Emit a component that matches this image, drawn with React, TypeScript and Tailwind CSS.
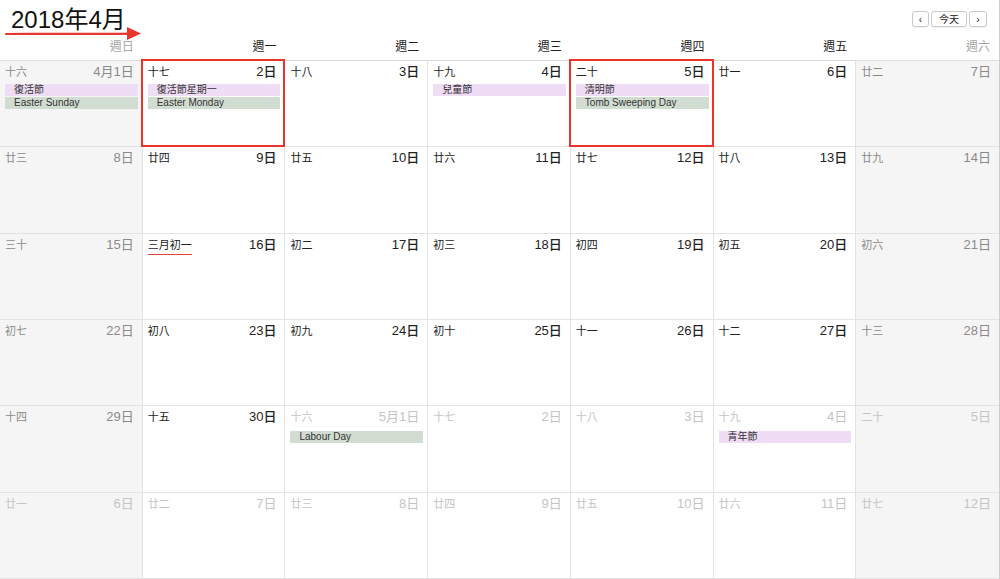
type Ev = { title: string; kind: "holiday" | "intl" };

interface Day {
  lunar: string;
  label: string;
  inMonth: boolean;
  events?: Ev[];
  highlight?: boolean;
  underline?: boolean;
}

const weekdays = ["週日", "週一", "週二", "週三", "週四", "週五", "週六"];

const lunars = [
  "十六", "十七", "十八", "十九", "二十", "廿一", "廿二",
  "廿三", "廿四", "廿五", "廿六", "廿七", "廿八", "廿九",
  "三十", "三月初一", "初二", "初三", "初四", "初五", "初六",
  "初七", "初八", "初九", "初十", "十一", "十二", "十三",
  "十四", "十五", "十六", "十七", "十八", "十九", "二十",
  "廿一", "廿二", "廿三", "廿四", "廿五", "廿六", "廿七",
];

const eventsByIndex: Record<number, Ev[]> = {
  0: [
    { title: "復活節", kind: "holiday" },
    { title: "Easter Sunday", kind: "intl" },
  ],
  1: [
    { title: "復活節星期一", kind: "holiday" },
    { title: "Easter Monday", kind: "intl" },
  ],
  3: [{ title: "兒童節", kind: "holiday" }],
  4: [
    { title: "清明節", kind: "holiday" },
    { title: "Tomb Sweeping Day", kind: "intl" },
  ],
  30: [{ title: "Labour Day", kind: "intl" }],
  33: [{ title: "青年節", kind: "holiday" }],
};

const days: Day[] = lunars.map((lunar, i) => {
  const inMonth = i < 30;
  const n = inMonth ? i + 1 : i - 29;
  let label = `${n}日`;
  if (i === 0) label = "4月1日";
  if (i === 30) label = "5月1日";
  return {
    lunar,
    label,
    inMonth,
    events: eventsByIndex[i],
    highlight: i === 1 || i === 4,
    underline: i === 15,
  };
});

function DayCell({ day, col }: { day: Day; col: number }) {
  const weekend = col === 0 || col === 6;
  const textColor = !day.inMonth
    ? "text-[#c4c4c4]"
    : weekend
      ? "text-[#8a8a8a]"
      : "text-[#222]";
  return (
    <div
      className={`relative border-b border-[#e3e3e3] ${col < 6 ? "border-r" : ""} ${
        weekend ? "bg-[#f5f5f5]" : "bg-white"
      }`}
    >
      <div className={`flex justify-between items-center h-[14px] mt-[4px] pl-[5px] pr-[8px] ${textColor}`}>
        <span className="text-[11px] leading-[14px]">
          {day.underline ? (
            <span className="border-b border-[#e0443a] pb-[3px]">{day.lunar}</span>
          ) : (
            day.lunar
          )}
        </span>
        <span className={`text-[13px] leading-[14px] ${day.inMonth && !weekend ? "font-medium" : ""}`}>
          {day.label}
        </span>
      </div>
      {day.events && (
        <div className={`flex flex-col gap-[1px] ml-[5px] mr-[4px] ${day.inMonth ? "mt-[5px]" : "mt-[7px]"}`}>
          {day.events.map((ev) => (
            <div
              key={ev.title}
              className={`h-[12px] pl-[9px] text-[10px] leading-[12px] text-[#333] truncate ${
                ev.kind === "holiday" ? "bg-[#efdcf5]" : "bg-[#d2ddd2]"
              }`}
            >
              {ev.title}
            </div>
          ))}
        </div>
      )}
      {day.highlight && (
        <div className="absolute -top-[2px] -bottom-[1px] -left-[2px] -right-[1px] border-2 border-[#e8352d] pointer-events-none" />
      )}
    </div>
  );
}

export default function App() {
  return (
    <div
      className="w-[1000px] h-[579px] flex flex-col bg-white overflow-hidden border-r border-[#cdcdcd]"
      style={{ fontFamily: '"Liberation Sans", "Noto Sans CJK TC", sans-serif' }}
    >
      <div className="relative h-[61px] border-b border-[#dcdcdc] flex flex-col">
        <div className="h-[38px] flex justify-between items-start">
          <h1 className="pl-[11px] pt-[6px] text-[24px] leading-[28px] text-[#111]">2018年4月</h1>
          <div className="flex gap-[2px] mt-[11px] mr-[12px] text-[10px] text-[#222]">
            <button className="w-[17px] h-[16px] border border-[#cacaca] rounded-[3px] bg-white shadow-[0_1px_0_rgba(0,0,0,0.05)] flex items-center justify-center">
              ‹
            </button>
            <button className="w-[36px] h-[16px] border border-[#cacaca] rounded-[3px] bg-white shadow-[0_1px_0_rgba(0,0,0,0.05)] flex items-center justify-center">
              今天
            </button>
            <button className="w-[18px] h-[16px] border border-[#cacaca] rounded-[3px] bg-white shadow-[0_1px_0_rgba(0,0,0,0.05)] flex items-center justify-center">
              ›
            </button>
          </div>
        </div>
        <div className="h-[22px] grid grid-cols-7">
          {weekdays.map((w, i) => (
            <div
              key={w}
              className={`text-right pr-[9px] text-[12px] leading-[18px] ${
                i === 0 || i === 6 ? "text-[#a6a6a6]" : "text-[#222]"
              }`}
            >
              {w}
            </div>
          ))}
        </div>
        {/* red annotation arrow */}
        <svg className="absolute left-0 top-[24px] pointer-events-none" width="150" height="20" viewBox="0 0 150 20">
          <path d="M6 10 C40 9.5 90 10.5 130 9.6" stroke="#e8352d" strokeWidth="2.2" fill="none" strokeLinecap="round" />
          <polygon points="127,3 141,9.5 127,16" fill="#e8352d" />
        </svg>
      </div>
      <div className="flex-1 grid grid-cols-7 grid-rows-6">
        {days.map((d, i) => (
          <DayCell key={i} day={d} col={i % 7} />
        ))}
      </div>
    </div>
  );
}
